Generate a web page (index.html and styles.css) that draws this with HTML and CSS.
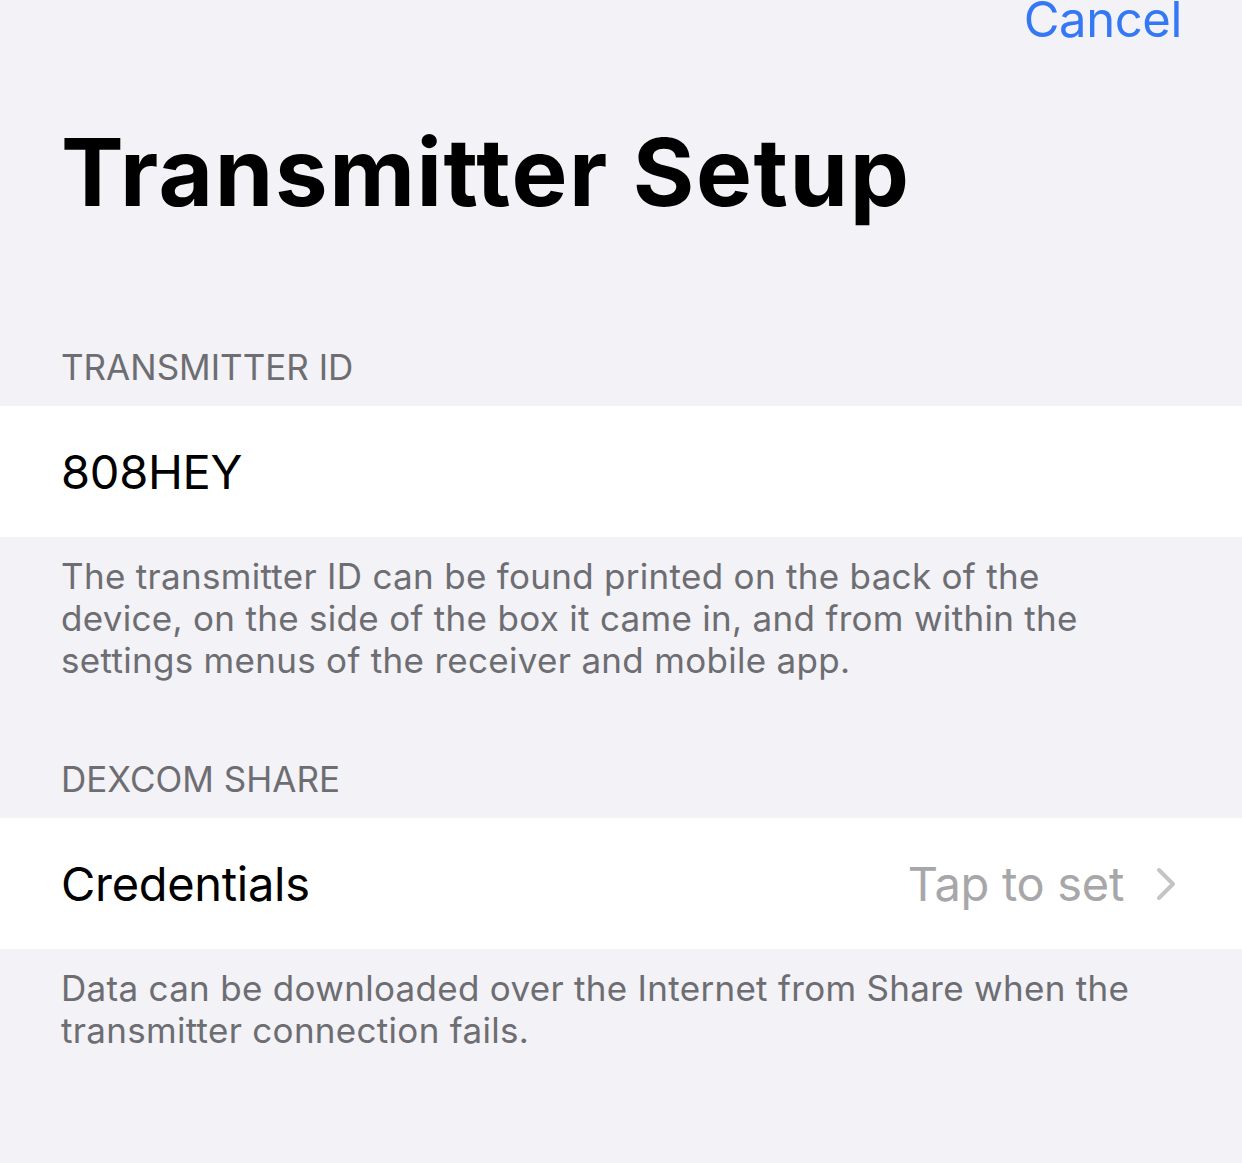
FILE: index.html
```html
<!DOCTYPE html>
<html lang="en">
<head>
<meta charset="utf-8">
<title>Transmitter Setup</title>
<link rel="stylesheet" href="styles.css">
</head>
<body>
<div class="screen">
  <div class="nav">
    <span class="cancel">Cancel</span>
  </div>
  <h1 class="title">Transmitter Setup</h1>

  <div class="section-header">TRANSMITTER ID</div>
  <div class="row">
    <span class="row-label">808HEY</span>
  </div>
  <div class="section-footer">The transmitter ID can be found printed on the back of the device, on the side of the box it came in, and from within the settings menus of the receiver and mobile app.</div>

  <div class="section-header second">DEXCOM SHARE</div>
  <div class="row">
    <span class="row-label">Credentials</span>
    <span class="row-value">Tap to set</span>
    <svg class="chevron" width="20" height="34" viewBox="0 0 20 34" aria-hidden="true">
      <path d="M3 3 L17 17 L3 31" fill="none" stroke="#c4c4c7" stroke-width="4" stroke-linecap="round" stroke-linejoin="round"/>
    </svg>
  </div>
  <div class="section-footer">Data can be downloaded over the Internet from Share when the transmitter connection fails.</div>
</div>
</body>
</html>
```

FILE: styles.css
```css
html, body {
  margin: 0;
  padding: 0;
  background: #f2f2f7;
}
body {
  font-family: Inter, "Noto Sans", "Liberation Sans", sans-serif;
  width: 1242px;
  height: 1163px;
  overflow: hidden;
}
.screen {
  display: flex;
  flex-direction: column;
}
.nav {
  display: flex;
  justify-content: flex-end;
  padding: 0 60px 0 0;
  height: 50px;
  margin-top: -10px;
}
.cancel {
  font-size: 49px;
  line-height: 60px;
  letter-spacing: -0.4px;
  color: #3478f6;
}
.title {
  margin: 72px 0 0 0;
  padding: 0 0 0 61px;
  font-size: 94px;
  line-height: 120px;
  font-weight: 700;
  color: #000;
  letter-spacing: 1.6px;
}
.section-header {
  margin-top: 110px;
  padding: 0 61px;
  font-size: 35px;
  line-height: 50px;
  color: #6d6d72;
  height: 64px;
}
.section-header.second {
  margin-top: 73px;
}
.row {
  background: #fff;
  height: 131px;
  display: flex;
  align-items: center;
  padding: 0 66px 0 61px;
}
.row-label {
  font-size: 47px;
  letter-spacing: -0.3px;
  color: #000;
  flex: 1;
}
.row-value {
  font-size: 47px;
  letter-spacing: -0.3px;
  color: #a7a7aa;
  margin-right: 32px;
}
.chevron {
  display: block;
}
.section-footer {
  padding: 18px 90px 0 61px;
  font-size: 35px;
  line-height: 42px;
  letter-spacing: 0.3px;
  color: #6d6d72;
}
```
